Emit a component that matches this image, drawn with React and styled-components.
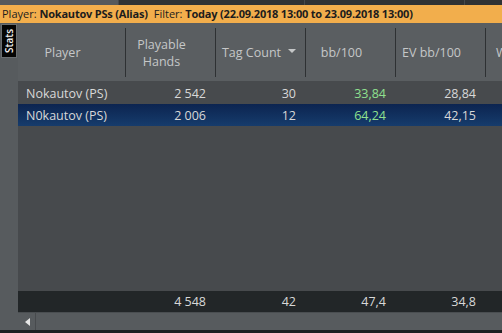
import React from "react";
import styled, { createGlobalStyle } from "styled-components";

const Global = createGlobalStyle`
  html, body { margin: 0; padding: 0; background: #474a4d; }
  body { font-family: "Open Sans", "Noto Sans", sans-serif; }
`;

const Screen = styled.div`
  width: 502px;
  height: 333px;
  display: flex;
  flex-direction: column;
  overflow: hidden;
  background: #474a4d;
`;

const TabStrip = styled.div`
  height: 5px;
  display: flex;
  background: #2f3234;
`;

const StripTab = styled.div`
  width: ${p => p.w}px;
  background: ${p => (p.active ? "#55595c" : "#2f3234")};
  border-right: 1px solid #45494c;
`;

const FilterBar = styled.div`
  height: 18px;
  background: #f2ae4c;
  color: #1c1c1c;
  font-size: 11px;
  line-height: 18px;
  padding-left: 2px;
  white-space: nowrap;
  overflow: hidden;
  b { font-weight: 700; letter-spacing: -0.2px; }
`;

const Gap = styled.span`
  display: inline-block;
  width: 6px;
`;

const Main = styled.div`
  flex: 1;
  display: flex;
  min-height: 0;
`;

const SideStrip = styled.div`
  width: 18px;
  background: #575b5e;
  padding-top: 1px;
  box-sizing: border-box;
`;

const SideTab = styled.div`
  width: 16px;
  height: 34px;
  margin-left: 1px;
  background: #050505;
  border: 1px solid #6a6e71;
  box-sizing: border-box;
  display: flex;
  align-items: center;
  justify-content: center;
  span {
    transform: rotate(-90deg);
    color: #f2f2f2;
    font-size: 10px;
    font-weight: 600;
    white-space: nowrap;
  }
`;

const Grid = styled.div`
  flex: 1;
  display: flex;
  flex-direction: column;
  min-width: 0;
`;

const cols = "108px 90px 90px 90px 90px 90px";

const HeaderRow = styled.div`
  height: 58px;
  display: grid;
  grid-template-columns: ${cols};
  background: #5a5e61;
  padding: 5px 0 4px;
  box-sizing: border-box;
`;

const HeadCell = styled.div`
  display: flex;
  align-items: center;
  justify-content: ${p => (p.start ? "flex-start" : "center")};
  text-align: center;
  color: #c5c7c8;
  font-size: 12.5px;
  line-height: 17px;
  padding: ${p => (p.start ? "0 0 0 10px" : "0 18px 0 0")};
  border-right: 1px solid #2e3133;
  position: relative;
  white-space: nowrap;
  &:last-child { border-right: none; }
`;

const SortArrow = styled.span`
  position: absolute;
  right: 9px;
  top: 21px;
  width: 0;
  height: 0;
  border-left: 4px solid transparent;
  border-right: 4px solid transparent;
  border-top: 4px solid #c5c7c8;
`;

const Body = styled.div`
  flex: 1;
  background: #474a4d;
  padding-top: 1px;
`;

const Row = styled.div`
  height: 22px;
  display: grid;
  grid-template-columns: ${cols};
  align-items: center;
  background: ${p => (p.selected ? "linear-gradient(#0c2450, #163c6c)" : "transparent")};
  color: #d8d8d8;
  font-size: 12.5px;
`;

const Cell = styled.div`
  text-align: ${p => (p.left ? "left" : "right")};
  padding: ${p => (p.left ? "0 0 0 8px" : "0 10px 0 0")};
  color: ${p => (p.green ? "#8fe08f" : "inherit")};
  white-space: nowrap;
`;

const TotalRow = styled(Row)`
  height: 21px;
  background: #222628;
`;

const ScrollBar = styled.div`
  height: 17px;
  background: #575b5e;
  display: flex;
  border-top: 1px solid #4a4e51;
`;

const ScrollBtn = styled.div`
  width: 16px;
  margin-left: 1px;
  border-right: 1px solid #474a4d;
  display: flex;
  align-items: center;
  justify-content: center;
  &::before {
    content: "";
    border-top: 4px solid transparent;
    border-bottom: 4px solid transparent;
    border-right: 5px solid #e6e6e6;
  }
`;

const Bottom = styled.div`
  height: 3px;
  background: #1d1f21;
`;

const rows = [
  { name: "Nokautov (PS)", hands: "2 542", tags: "30", bb: "33,84", ev: "28,84" },
  { name: "N0kautov (PS)", hands: "2 006", tags: "12", bb: "64,24", ev: "42,15", selected: true },
];

export default function App() {
  return (
    <Screen>
      <Global />
      <TabStrip>
        <StripTab w={118} active />
        <StripTab w={185} />
        <StripTab w={159} />
      </TabStrip>
      <FilterBar>
        Player: <b>Nokautov PSs (Alias)</b>
        <Gap />
        Filter: <b>Today (22.09.2018 13:00 to 23.09.2018 13:00)</b>
      </FilterBar>
      <Main>
        <SideStrip>
          <SideTab><span>Stats</span></SideTab>
        </SideStrip>
        <Grid>
          <HeaderRow>
            <HeadCell>Player</HeadCell>
            <HeadCell>Playable<br />Hands</HeadCell>
            <HeadCell>
              Tag Count<SortArrow />
            </HeadCell>
            <HeadCell>bb/100</HeadCell>
            <HeadCell>EV bb/100</HeadCell>
            <HeadCell start>W</HeadCell>
          </HeaderRow>
          <Body>
            {rows.map(r => (
              <Row key={r.name} selected={r.selected}>
                <Cell left>{r.name}</Cell>
                <Cell>{r.hands}</Cell>
                <Cell>{r.tags}</Cell>
                <Cell green>{r.bb}</Cell>
                <Cell>{r.ev}</Cell>
                <Cell />
              </Row>
            ))}
          </Body>
          <TotalRow>
            <Cell left />
            <Cell>4 548</Cell>
            <Cell>42</Cell>
            <Cell>47,4</Cell>
            <Cell>34,8</Cell>
            <Cell />
          </TotalRow>
          <ScrollBar>
            <ScrollBtn />
          </ScrollBar>
        </Grid>
      </Main>
      <Bottom />
    </Screen>
  );
}
